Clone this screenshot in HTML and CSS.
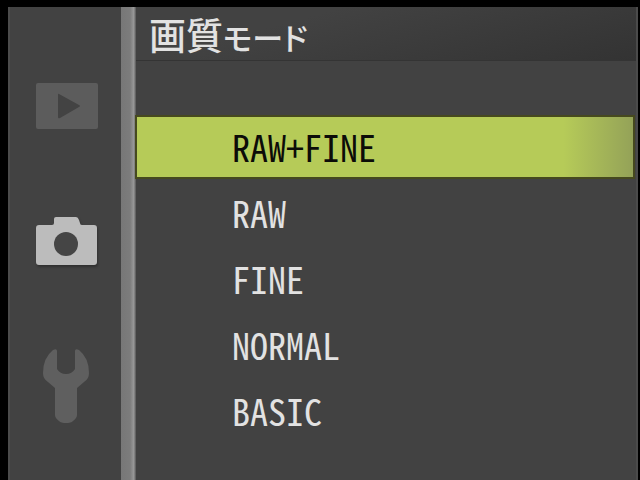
FILE: index.html
```html
<!DOCTYPE html>
<html lang="ja">
<head>
  <meta charset="UTF-8">
  <meta name="viewport" content="width=device-width, initial-scale=1.0">
  <title>画質モード</title>
  <link rel="stylesheet" href="styles.css">
</head>
<body>
  <div class="screen">
    <nav class="tabs">
      <button type="button" class="tab" aria-label="再生">
        <svg class="icon" width="64" height="48" viewBox="0 0 64 48">
          <rect x="1" y="0" width="62" height="46" rx="2" fill="#5c5c5c"/>
          <path d="M24 11 L44 22 Q46 23 44 24 L25 35 Q23 36 23 34 V12 Q23 10 24 11Z" fill="#434343"/>
        </svg>
      </button>
      <button type="button" class="tab active" aria-label="撮影">
        <svg class="icon" width="64" height="57" viewBox="0 -5 64 57">
          <path d="M4 9 H17 Q19 9 19 7 V3 Q19 1 21 1 H41 Q43 1 44 4 L45 7 Q45 9 47 9 H59 Q62 9 62 12 V46 Q62 49 59 49 H4 Q1 49 1 46 V12 Q1 9 4 9Z" fill="#bcbcbc"/>
          <circle cx="31" cy="28" r="12" fill="#454545"/>
        </svg>
      </button>
      <button type="button" class="tab" aria-label="セットアップ">
        <svg class="icon" width="64" height="77" viewBox="0 1 64 77">
          <path d="M18 3 Q22 1 22 4 V22 Q25 27 31 27 Q37 27 40 22 V4 Q40 1 44 3 Q54 11 54 26 Q54 32 49 35 L42 41 V68 Q42 71 38 74 Q36 76 31 76 Q26 76 24 74 Q20 71 20 68 V41 L13 35 Q8 32 8 26 Q8 11 18 3Z" fill="#5f5f5f"/>
        </svg>
      </button>
    </nav>
    <div class="divider"></div>
    <main class="panel">
      <h1 class="title">画質<span class="kana">モード</span></h1>
      <div class="options">
        <button type="button" class="option selected">RAW+FINE</button>
        <button type="button" class="option">RAW</button>
        <button type="button" class="option">FINE</button>
        <button type="button" class="option">NORMAL</button>
        <button type="button" class="option">BASIC</button>
      </div>
    </main>
  </div>
</body>
</html>
```

FILE: styles.css
```css
* {
  box-sizing: border-box;
}
body {
  margin: 0;
  background: #000;
  color: #e2e2e2;
  font-family: "Noto Sans CJK JP", sans-serif;
}
.screen {
  display: flex;
  min-height: 100vh;
  border: solid #000;
  border-width: 7px 2px 0 8px;
  background: #424242;
}
button {
  border: none;
  margin: 0;
  background: none;
  color: inherit;
  font-family: inherit;
  cursor: pointer;
}
.tabs {
  display: flex;
  flex-direction: column;
  align-items: flex-start;
  gap: 80px;
  width: 113px;
  padding: 76px 0 0 25px;
  border-left: 2px solid #4b4b4b;
}
.tab {
  padding: 0;
}
.icon {
  display: block;
}
.active .icon {
  filter: drop-shadow(1px 2px 1px #303030);
}
.divider {
  width: 15px;
  background: linear-gradient(to right, #777, #7c7c7c 60%, #999 85%, #555);
}
.panel {
  flex: 1;
  border-right: 2px solid #4b4b4b;
}
.title {
  margin: 0;
  padding-left: 13px;
  height: 54px;
  background: linear-gradient(165deg, #424242 30%, #333);
  border-bottom: 1px solid #343434;
  font-size: 37px;
  line-height: 54px;
  font-weight: 500;
  font-feature-settings: "palt";
}
.kana {
  font-size: 31px;
}
.options {
  display: flex;
  flex-direction: column;
  gap: 6px;
  padding: 56px 3px 0 1px;
}
.option {
  height: 60px;
  padding: 0 0 2px 95px;
  text-align: left;
  font-size: 36px;
  line-height: 58px;
  font-feature-settings: "hwid";
}
.option.selected {
  background: linear-gradient(to right, #b6cb58 86%, #94a258);
  box-shadow: 0 0 0 2px #46491f;
  color: #0c0c08;
}
```
